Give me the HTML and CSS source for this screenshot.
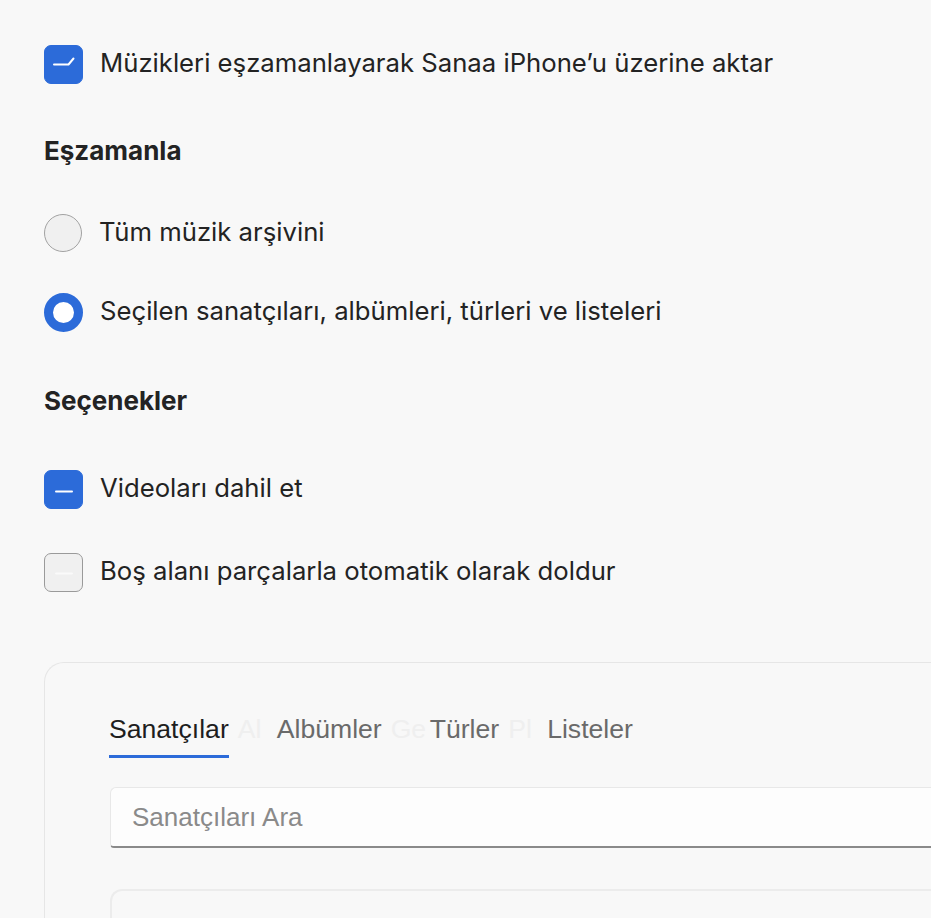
FILE: index.html
```html
<!DOCTYPE html>
<html>
<head>
  <title>Müzik</title>
  <meta charset="utf-8">
  <link rel="stylesheet" href="styles.css">
</head>
<body>
  <div class="page">
    <label class="row first">
      <span class="box on">
        <svg width="39" height="39" viewBox="0 0 39 39"><path d="M10 19.5 H24.5 L29.5 13.5" fill="none" stroke="#fff" stroke-width="2" stroke-linecap="round" stroke-linejoin="round"/></svg>
      </span>
      <span class="txt">Müzikleri eşzamanlayarak Sanaa iPhone’u üzerine aktar</span>
    </label>

    <div class="head h1">Eşzamanla</div>

    <label class="row r1">
      <span class="radio"></span>
      <span class="txt">Tüm müzik arşivini</span>
    </label>
    <label class="row r2">
      <span class="radio on"></span>
      <span class="txt">Seçilen sanatçıları, albümleri, türleri ve listeleri</span>
    </label>

    <div class="head h2">Seçenekler</div>

    <label class="row c1">
      <span class="box on">
        <svg width="39" height="39" viewBox="0 0 39 39"><path d="M12 21.5 H28" fill="none" stroke="#fff" stroke-width="2" stroke-linecap="round"/></svg>
      </span>
      <span class="txt">Videoları dahil et</span>
    </label>
    <label class="row c2">
      <span class="box">
        <svg width="39" height="39" viewBox="0 0 39 39"><path d="M12 20.5 H28" fill="none" stroke="#fff" stroke-width="2" stroke-linecap="round"/></svg>
      </span>
      <span class="txt">Boş alanı parçalarla otomatik olarak doldur</span>
    </label>

    <div class="panel">
      <div class="tabs">
        <div class="tab active">Sanatçılar</div>
        <span class="ghost">Al</span>
        <div class="tab">Albümler</div>
        <span class="ghost">Ge</span>
        <div class="tab">Türler</div>
        <span class="ghost">Pl</span>
        <div class="tab">Listeler</div>
      </div>
      <div class="search">Sanatçıları Ara</div>
      <div class="list"></div>
    </div>
  </div>
</body>
</html>
```

FILE: styles.css
```css
html, body {
  margin: 0;
  background: #f8f8f8;
  overflow: hidden;
}
body {
  font-family: Inter, "Noto Sans", sans-serif;
  color: #232323;
  font-size: 25.7px;
}
.page {
  padding: 44px 0 0 44px;
  height: 874px;
  overflow: hidden;
}
.row {
  display: flex;
  align-items: center;
  height: 40px;
}
.txt {
  margin-left: 17px;
  padding-bottom: 3px;
  white-space: nowrap;
}
.box {
  width: 37px;
  height: 37px;
  border-radius: 7px;
  border: 1px solid #9a9a9a;
  background: #f0f0f0;
  position: relative;
  flex: none;
}
.box svg {
  position: absolute;
  left: -1px;
  top: -1px;
}
.box.on {
  background: #2c6bd9;
  border-color: #2c6bd9;
}
.c2 .box svg {
  opacity: 0.7;
}
.radio {
  width: 36px;
  height: 36px;
  border-radius: 50%;
  border: 1.5px solid #a2a2a2;
  background: #f0f0f0;
  flex: none;
}
.radio.on {
  width: 21px;
  height: 21px;
  border: 9px solid #2c6bd9;
  background: #fff;
}
.head {
  font-weight: 700;
  font-size: 26px;
  height: 30px;
  line-height: 28px;
}
.h1 { margin-top: 53px; }
.r1 { margin-top: 46px; }
.r2 { margin-top: 39px; }
.h2 { margin-top: 55px; }
.c1 { margin-top: 52px; }
.c2 { margin-top: 43px; }

.panel {
  margin-top: 70px;
  border: 1px solid #e6e6e6;
  border-right: none;
  border-radius: 20px 0 0 0;
  padding: 44px 0 0 64px;
  height: 400px;
}
.tabs {
  display: flex;
  align-items: flex-start;
  font-family: "Liberation Sans", Arial, sans-serif;
  font-size: 26.6px;
  white-space: nowrap;
}
.tab {
  color: #6a6a6a;
  height: 44px;
  line-height: 44px;
  padding-bottom: 7px;
}
.tab.active {
  color: #1e1e1e;
  padding-bottom: 4px;
  border-bottom: 3px solid #2c6bd9;
}
.ghost {
  width: 48px;
  flex: none;
  padding-left: 9px;
  box-sizing: border-box;
  height: 44px;
  line-height: 44px;
  color: #efefef;
}
.search {
  margin-top: 29px;
  height: 58px;
  line-height: 58px;
  background: #fdfdfd;
  border: 1px solid #e8e8e8;
  border-right: none;
  border-bottom: 2px solid #8a8a8a;
  border-radius: 6px 0 0 4px;
  padding-left: 21px;
  color: #8a8a8a;
  font-family: "Liberation Sans", Arial, sans-serif;
  font-size: 26px;
  margin-left: 1px;
}
.list {
  margin-top: 41px;
  margin-left: 1px;
  height: 100px;
  border: 2px solid #ececec;
  border-right: none;
  border-radius: 12px 0 0 0;
}
```
